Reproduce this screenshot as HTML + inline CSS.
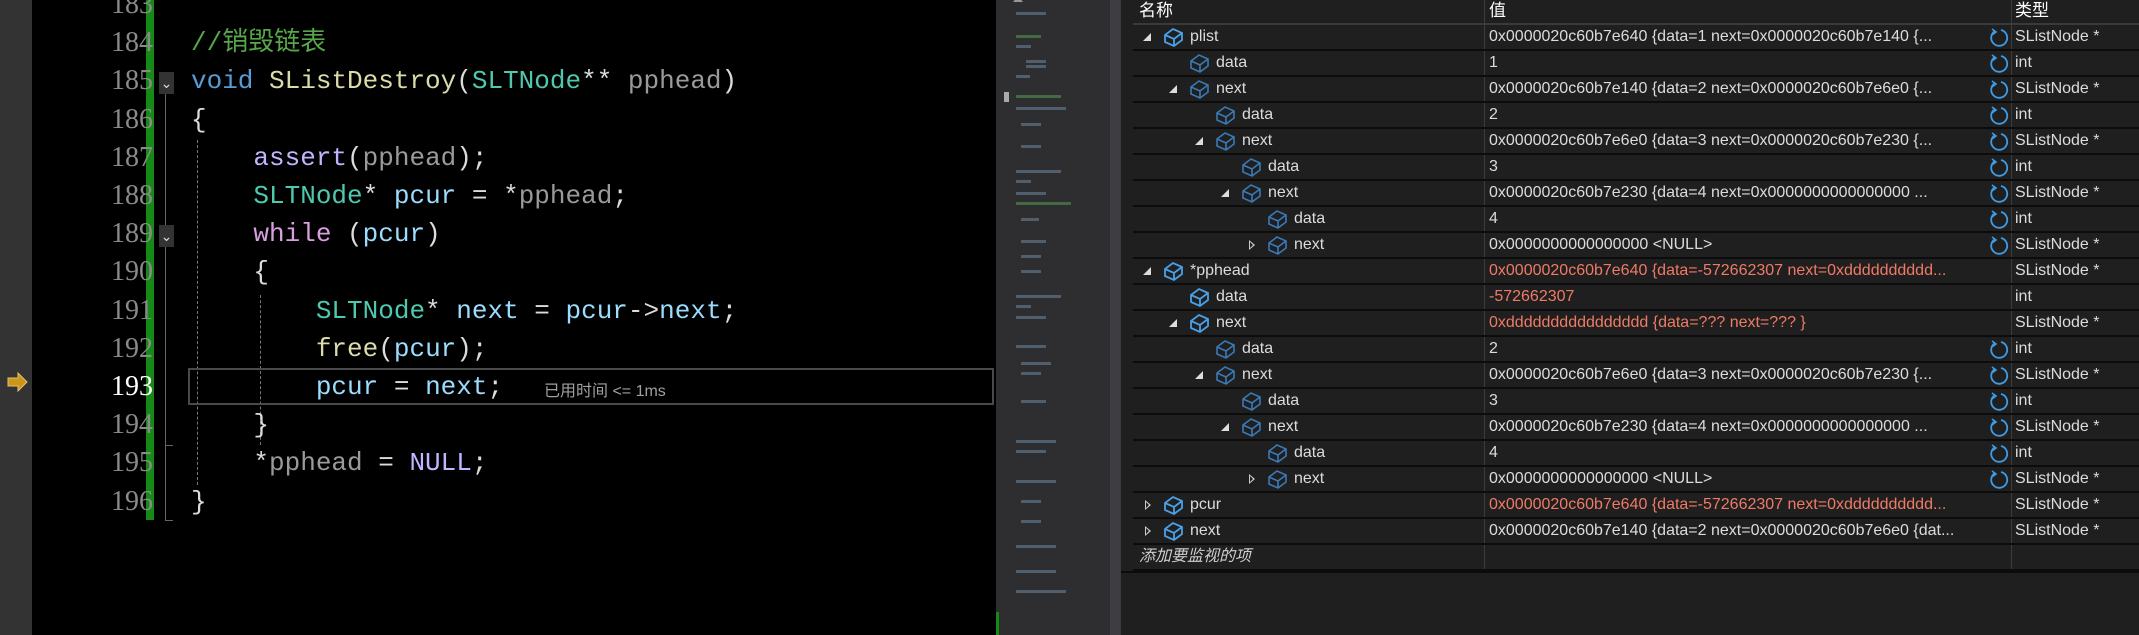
<!DOCTYPE html>
<html><head><meta charset="utf-8">
<style>
*{margin:0;padding:0;box-sizing:border-box}
body{width:2139px;height:635px;background:#000;position:relative;overflow:hidden;font-family:"Liberation Sans","Noto Sans CJK SC",sans-serif}
.a{position:absolute}
.ln{position:absolute;left:40px;width:113px;text-align:right;font-family:"Liberation Serif",serif;font-size:28px;color:#8a8a8a;height:38px;line-height:38px}
.cl{position:absolute;left:191px;font-family:"Liberation Mono","Noto Sans CJK SC",monospace;font-size:26px;white-space:pre;color:#dcdcdc;height:38px;line-height:38px}
.kw{color:#569cd6}.ty{color:#4ec9b0}.fn{color:#dcdcaa}.pa{color:#9a9a9a}.lv{color:#9cdcfe}.mc{color:#beb7ff}.cm{color:#57a64a}.ct{color:#d8a0df}
.row{position:absolute;left:1133px;width:1006px;height:26px;border-bottom:2px solid #0c0c0c;font-size:16px;color:#dcdcdc;line-height:24px}
.row span{position:absolute;white-space:nowrap}
.v{left:356px}.t{left:882px}
.red{color:#f07a66}
.tri{position:absolute;top:8px;width:0;height:0}
.open{border-left:8px solid transparent;border-bottom:8px solid #ddd}
.closed{border-top:5px solid transparent;border-bottom:5px solid transparent;border-left:6px solid #ccc;top:7px}
.closed:after{content:"";position:absolute;left:-5px;top:-3px;border-top:3px solid transparent;border-bottom:3px solid transparent;border-left:3px solid #1f1f1f}
</style></head><body>
<!-- gutter -->
<div class="a" style="left:0;top:0;width:32px;height:635px;background:#333"></div>
<svg class="a" style="left:7px;top:372px" width="22" height="20" viewBox="0 0 22 20"><path d="M1 6h10V1l9 9-9 9v-5H1z" fill="#c9961a" stroke="#e8c070" stroke-width="1"/></svg>
<div class="a" style="left:146px;top:0;width:8px;height:520px;background:#168a16"></div>
<div class="a" style="left:165px;top:84px;width:1px;height:437px;background:#666"></div>
<div class="a" style="left:165px;top:520px;width:8px;height:1px;background:#666"></div>
<div class="a" style="left:165px;top:445px;width:8px;height:1px;background:#666"></div>
<div class="a" style="left:159px;top:72px;width:15px;height:22px;background:#333;color:#ddd;font-size:14px;text-align:center;line-height:22px">⌄</div>
<div class="a" style="left:159px;top:225px;width:15px;height:22px;background:#333;color:#ddd;font-size:14px;text-align:center;line-height:22px">⌄</div>
<div class="a" style="left:197px;top:140px;height:345px;border-left:1px dashed #777"></div>
<div class="a" style="left:260px;top:295px;height:150px;border-left:1px dashed #777"></div>
<!-- current line box -->
<div class="a" style="left:188px;top:368px;width:806px;height:37px;border:2px solid #4a4a4a"></div>

<div class="ln" style="top:-14px">183</div>
<div class="ln" style="top:24px">184</div>
<div class="ln" style="top:62px">185</div>
<div class="ln" style="top:101px">186</div>
<div class="ln" style="top:139px">187</div>
<div class="ln" style="top:177px">188</div>
<div class="ln" style="top:215px">189</div>
<div class="ln" style="top:253px">190</div>
<div class="ln" style="top:292px">191</div>
<div class="ln" style="top:330px">192</div>
<div class="ln" style="top:368px;color:#fff">193</div>
<div class="ln" style="top:406px">194</div>
<div class="ln" style="top:444px">195</div>
<div class="ln" style="top:483px">196</div>

<div class="cl cm" style="top:24px">//销毁链表</div>
<div class="cl" style="top:62px"><span class="kw">void</span> <span class="fn">SListDestroy</span>(<span class="ty">SLTNode</span>** <span class="pa">pphead</span>)</div>
<div class="cl" style="top:101px">{</div>
<div class="cl" style="top:139px">    <span class="mc">assert</span>(<span class="pa">pphead</span>);</div>
<div class="cl" style="top:177px">    <span class="ty">SLTNode</span>* <span class="lv">pcur</span> = *<span class="pa">pphead</span>;</div>
<div class="cl" style="top:215px">    <span class="ct">while</span> (<span class="lv">pcur</span>)</div>
<div class="cl" style="top:253px">    {</div>
<div class="cl" style="top:292px">        <span class="ty">SLTNode</span>* <span class="lv">next</span> = <span class="lv">pcur</span>-&gt;<span class="lv">next</span>;</div>
<div class="cl" style="top:330px">        <span class="fn">free</span>(<span class="lv">pcur</span>);</div>
<div class="cl" style="top:368px">        <span class="lv">pcur</span> = <span class="lv">next</span>;</div>
<div class="a" style="left:544px;top:377px;font-size:16px;color:#a0a0a0">已用时间 &lt;= 1ms</div>
<div class="cl" style="top:406px">    }</div>
<div class="cl" style="top:444px">    *<span class="pa">pphead</span> = <span class="mc">NULL</span>;</div>
<div class="cl" style="top:483px">}</div>

<!-- minimap -->
<div class="a" style="left:996px;top:0;width:114px;height:635px;background:#2e2e30"></div>
<div class="a" style="left:996px;top:612px;width:3px;height:23px;background:#168a16"></div>
<svg class="a" style="left:996px;top:0" width="114" height="635">
<g fill="#5a6a7a" opacity=".8">
<rect x="20" y="12" width="30" height="3"/><rect x="20" y="35" width="25" height="3" fill="#4a7a4a"/><rect x="20" y="45" width="15" height="3"/>
<rect x="30" y="60" width="20" height="3"/><rect x="30" y="65" width="20" height="3"/><rect x="20" y="75" width="14" height="3"/>
<rect x="20" y="95" width="45" height="3" fill="#4a7a4a"/><rect x="20" y="107" width="50" height="3"/><rect x="25" y="123" width="20" height="3"/>
<rect x="25" y="145" width="20" height="3"/><rect x="20" y="170" width="45" height="3"/><rect x="20" y="180" width="15" height="3"/>
<rect x="20" y="192" width="30" height="3"/><rect x="20" y="202" width="55" height="3" fill="#4a7a4a"/><rect x="25" y="218" width="18" height="3"/>
<rect x="25" y="240" width="25" height="3"/><rect x="25" y="255" width="20" height="3"/><rect x="25" y="270" width="20" height="3"/>
<rect x="20" y="295" width="45" height="3"/><rect x="20" y="305" width="15" height="3"/><rect x="20" y="316" width="30" height="3"/>
<rect x="20" y="345" width="30" height="3"/><rect x="25" y="362" width="30" height="3"/><rect x="25" y="372" width="20" height="3"/>
<rect x="25" y="400" width="25" height="3"/><rect x="20" y="440" width="40" height="3"/><rect x="20" y="450" width="30" height="3"/>
<rect x="20" y="480" width="40" height="3"/><rect x="25" y="500" width="20" height="3"/><rect x="25" y="520" width="20" height="3"/>
<rect x="20" y="545" width="40" height="3"/><rect x="20" y="570" width="40" height="3"/><rect x="20" y="590" width="50" height="3"/>
</g>
<rect x="8" y="92" width="5" height="10" fill="#aaa"/>
<path d="M17 2l5 -6 5 6z" fill="#999"/>
</svg>
<div class="a" style="left:1110px;top:0;width:10px;height:635px;background:#3e3e42"></div>
<div class="a" style="left:1120px;top:0;width:1019px;height:635px;background:#1f1f1f;border-left:1px solid #3a3a3a"></div>

<!-- watch header -->
<div class="a" style="left:1133px;top:0;width:1006px;height:25px;border-bottom:2px solid #3a3a3a;font-size:17px;color:#fff;line-height:22px">
<span class="a" style="left:6px">名称</span><span class="a" style="left:356px">值</span><span class="a" style="left:882px">类型</span></div>
<div class="a" style="left:1484px;top:0;width:1px;height:572px;background:#3c3c3c"></div>
<div class="a" style="left:2011px;top:0;width:1px;height:572px;background:#3c3c3c"></div>
<div class="a" style="left:1121px;top:571px;width:1018px;height:2px;background:#0c0c0c"></div>

<svg width="0" height="0" style="position:absolute">
<defs>
<g id="ic"><path d="M2 8 L10 2 L19 6 L19 13 L11 19 L2 15 Z M2 8 L11 12 L19 6 M11 12 L11 19" fill="none" stroke="#3a7ab8" stroke-width="1.6"/></g>
<g id="icb"><path d="M2 8 L10 2 L19 6 L19 13 L11 19 L2 15 Z M2 8 L11 12 L19 6 M11 12 L11 19" fill="none" stroke="#4aa0e8" stroke-width="1.8"/></g>
<g id="rf"><path d="M6 3 A8 8 0 1 0 12 2" fill="none" stroke="#3e9be6" stroke-width="1.8"/><path d="M3 1 L7 4 L3 7" fill="none" stroke="#3e9be6" stroke-width="1.6"/></g>
</defs></svg>

<div id="rows"></div>
<script>
var R=[
[0,'open','plist','0x0000020c60b7e640 {data=1 next=0x0000020c60b7e140 {...','SListNode *',0,1,1],
[1,'','data','1','int',0,1,0],
[1,'open','next','0x0000020c60b7e140 {data=2 next=0x0000020c60b7e6e0 {...','SListNode *',0,1,0],
[2,'','data','2','int',0,1,0],
[2,'open','next','0x0000020c60b7e6e0 {data=3 next=0x0000020c60b7e230 {...','SListNode *',0,1,0],
[3,'','data','3','int',0,1,0],
[3,'open','next','0x0000020c60b7e230 {data=4 next=0x0000000000000000 ...','SListNode *',0,1,0],
[4,'','data','4','int',0,1,0],
[4,'closed','next','0x0000000000000000 &lt;NULL&gt;','SListNode *',0,1,0],
[0,'open','*pphead','0x0000020c60b7e640 {data=-572662307 next=0xdddddddddd...','SListNode *',1,0,1],
[1,'','data','-572662307','int',1,0,1],
[1,'open','next','0xdddddddddddddddd {data=??? next=??? }','SListNode *',1,0,1],
[2,'','data','2','int',0,1,0],
[2,'open','next','0x0000020c60b7e6e0 {data=3 next=0x0000020c60b7e230 {...','SListNode *',0,1,0],
[3,'','data','3','int',0,1,0],
[3,'open','next','0x0000020c60b7e230 {data=4 next=0x0000000000000000 ...','SListNode *',0,1,0],
[4,'','data','4','int',0,1,0],
[4,'closed','next','0x0000000000000000 &lt;NULL&gt;','SListNode *',0,1,0],
[0,'closed','pcur','0x0000020c60b7e640 {data=-572662307 next=0xdddddddddd...','SListNode *',1,0,1],
[0,'closed','next','0x0000020c60b7e140 {data=2 next=0x0000020c60b7e6e0 {dat...','SListNode *',0,0,1]
];
var h='';
R.forEach(function(r,i){
 var x=r[0]*26;
 h+='<div class="row" style="top:'+(25+i*26)+'px">';
 if(r[1])h+='<div class="tri '+r[1]+'" style="left:'+(x+(r[1]=='open'?10:12))+'px"></div>';
 h+='<svg class="a" style="left:'+(x+30)+'px;top:2px" width="22" height="22"><use href="#'+(r[7]?'icb':'ic')+'"/></svg>';
 h+='<span style="left:'+(x+57)+'px">'+r[2]+'</span>';
 h+='<span class="v'+(r[5]?' red':'')+'">'+r[3]+'</span>';
 if(r[6])h+='<svg class="a" style="left:856px;top:3px" width="20" height="20"><use href="#rf"/></svg>';
 h+='<span class="t">'+r[4]+'</span></div>';
});
h+='<div class="row" style="top:545px"><span style="left:6px;font-style:italic;color:#cfcfcf">添加要监视的项</span></div>';
document.getElementById('rows').innerHTML=h;
</script>
</body></html>
